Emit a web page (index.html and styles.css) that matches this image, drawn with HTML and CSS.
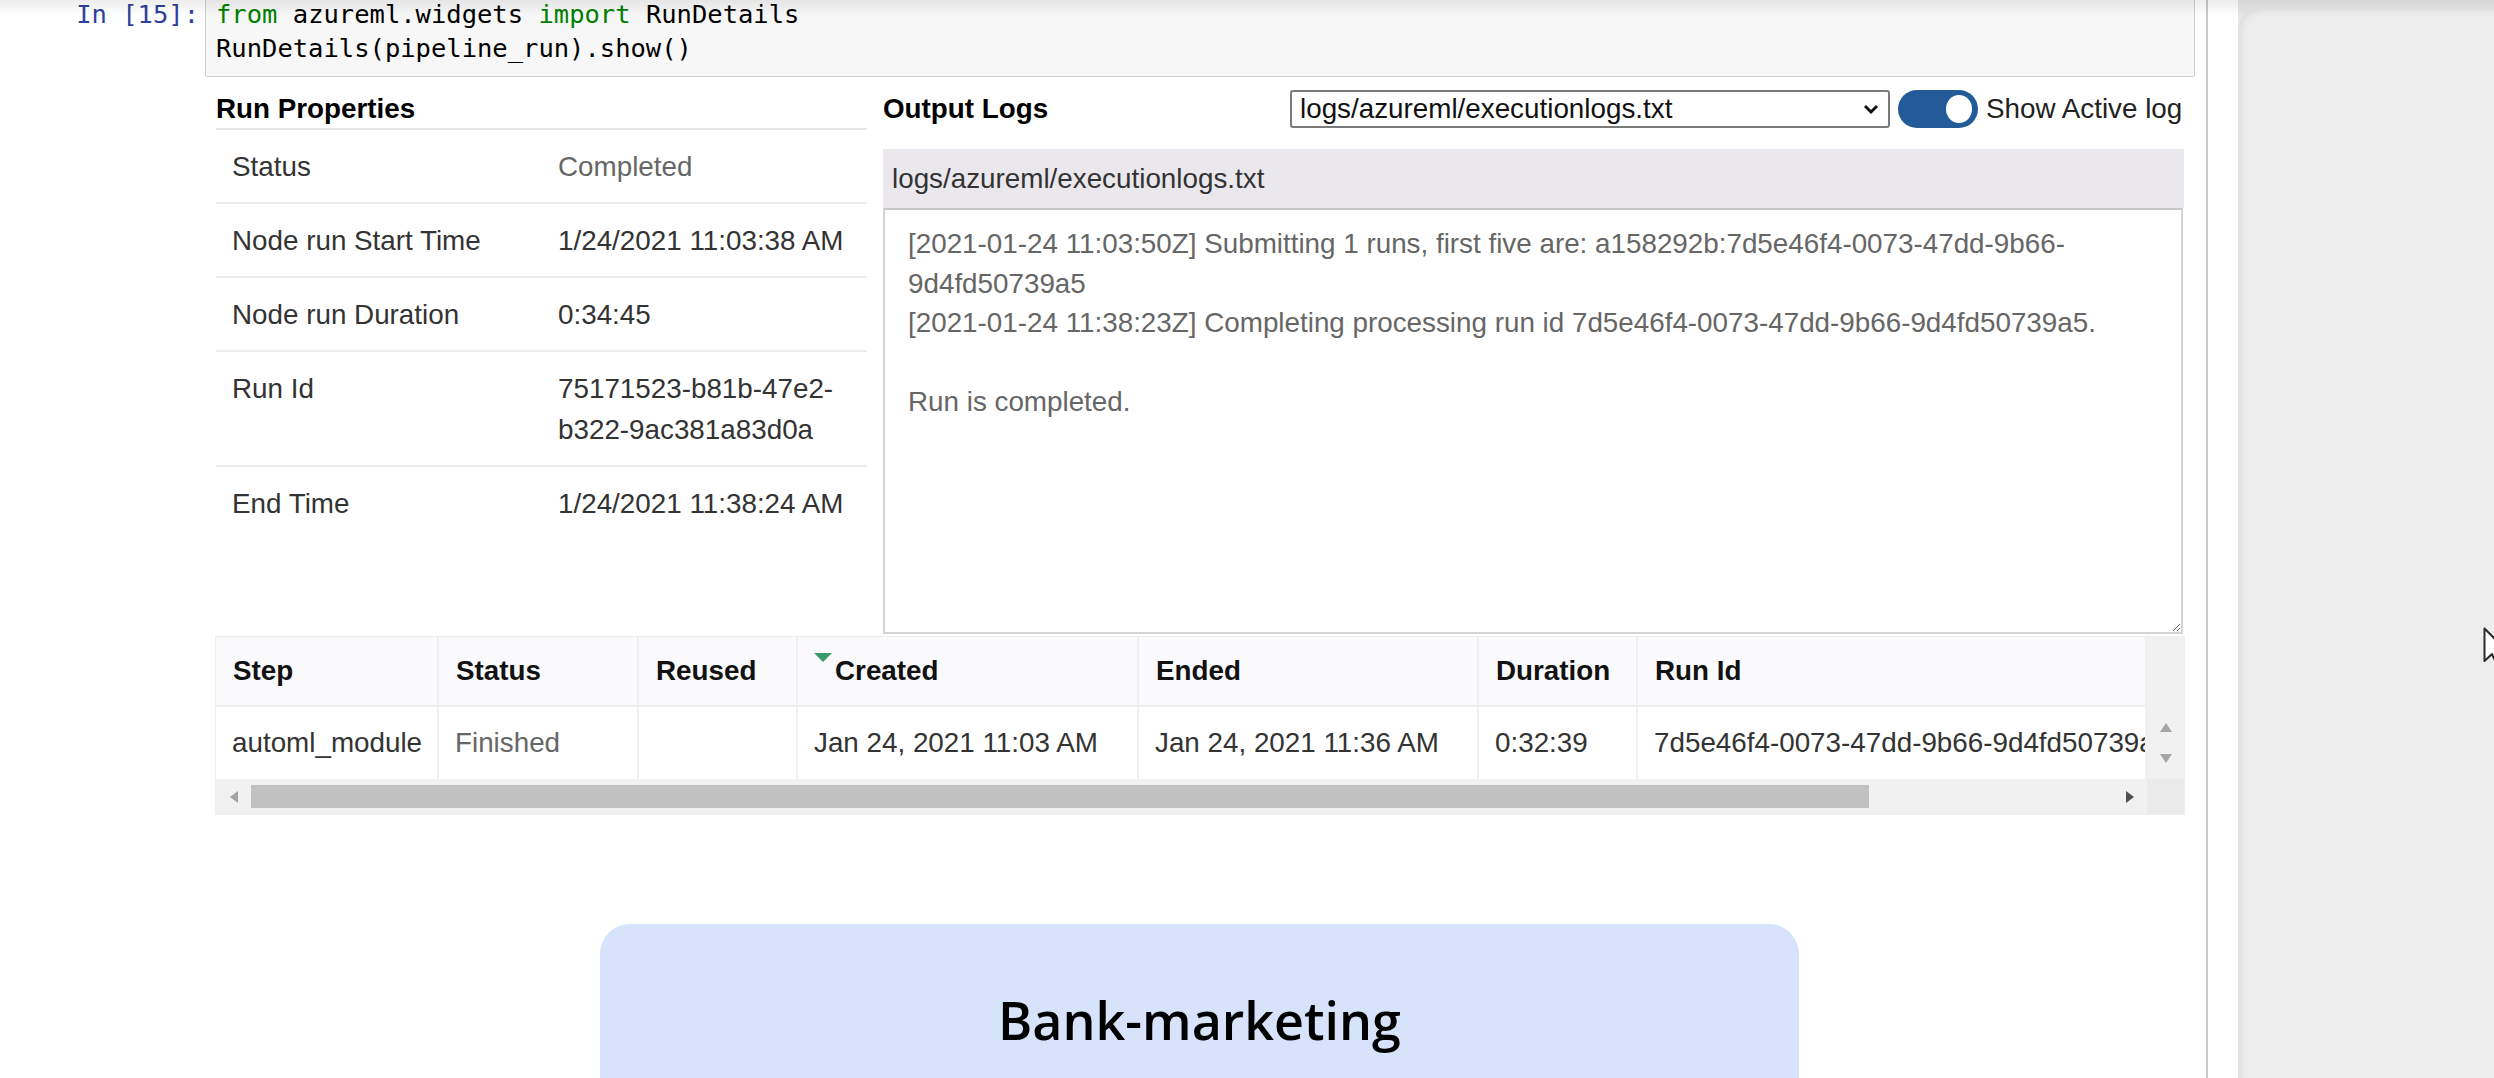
FILE: index.html
```html
<!DOCTYPE html>
<html>
<head>
<meta charset="utf-8">
<title>RunDetails</title>
<link rel="stylesheet" href="styles.css">
</head>
<body>
<div class="topshade"></div>
<div class="app">
  <main class="notebook">
    <div class="cell">
      <div class="prompt">In&nbsp;[15]:</div>
      <div class="code">
        <div><span class="kw">from</span> azureml.widgets <span class="kw">import</span> RunDetails</div>
        <div>RunDetails(pipeline_run).show()</div>
      </div>
    </div>
    <div class="output">
      <div class="widget-top">
        <section class="props">
          <div class="props-title">Run Properties</div>
          <div class="prow"><div class="pl">Status</div><div class="pv muted">Completed</div></div>
          <div class="prow"><div class="pl">Node run Start Time</div><div class="pv">1/24/2021 11:03:38 AM</div></div>
          <div class="prow"><div class="pl">Node run Duration</div><div class="pv">0:34:45</div></div>
          <div class="prow"><div class="pl">Run Id</div><div class="pv">75171523-b81b-47e2-<br>b322-9ac381a83d0a</div></div>
          <div class="prow last"><div class="pl">End Time</div><div class="pv">1/24/2021 11:38:24 AM</div></div>
        </section>
        <section class="logs">
          <div class="logs-bar">
            <div class="logs-title">Output Logs</div>
            <div class="select">
              <span>logs/azureml/executionlogs.txt</span>
              <svg class="chev" width="18" height="12" viewBox="0 0 18 12"><path d="M3 3 L9 9 L15 3" fill="none" stroke="#111" stroke-width="3"/></svg>
            </div>
            <div class="toggle"><span class="knob"></span></div>
            <div class="toggle-label">Show Active log</div>
          </div>
          <div class="log-head">logs/azureml/executionlogs.txt</div>
          <textarea class="log-body" readonly>[2021-01-24 11:03:50Z] Submitting 1 runs, first five are: a158292b:7d5e46f4-0073-47dd-9b66-
9d4fd50739a5
[2021-01-24 11:38:23Z] Completing processing run id 7d5e46f4-0073-47dd-9b66-9d4fd50739a5.

Run is completed.</textarea>
        </section>
      </div>
      <div class="steps">
        <div class="steps-main">
          <div class="th">Step</div>
          <div class="th">Status</div>
          <div class="th">Reused</div>
          <div class="th"><span class="sort"></span>Created</div>
          <div class="th">Ended</div>
          <div class="th">Duration</div>
          <div class="th">Run Id</div>
          <div class="td">automl_module</div>
          <div class="td muted">Finished</div>
          <div class="td"></div>
          <div class="td">Jan 24, 2021 11:03 AM</div>
          <div class="td">Jan 24, 2021 11:36 AM</div>
          <div class="td">0:32:39</div>
          <div class="td clip">7d5e46f4-0073-47dd-9b66-9d4fd50739a5</div>
        </div>
        <div class="vscroll">
          <span class="arr-up"></span>
          <span class="arr-down"></span>
        </div>
        <div class="hscroll">
          <span class="harr"><span class="arr-left"></span></span>
          <span class="thumb"></span>
          <span class="hspace"></span>
          <span class="harr"><span class="arr-right"></span></span>
        </div>
        <div class="corner"></div>
      </div>
    </div>
    <div class="card"><h2>Bank-marketing</h2></div>
  </main>
  <div class="gutter"></div>
  <aside class="side">
    <div class="side-inner"></div>
    <svg class="cursor" width="16" height="40" viewBox="0 0 16 40"><path d="M1.5 1.5 L1.5 34 L9 27 L14 38 L20 35 L15 25 L25 25 Z" fill="#fff" stroke="#2a2a2a" stroke-width="2" stroke-linejoin="round"/></svg>
  </aside>
</div>
</body>
</html>
```

FILE: styles.css
```css
* { box-sizing: border-box; }
html, body { margin: 0; height: 100%; overflow: hidden; background: #fff; }
body { font-family: "Liberation Sans", Arial, sans-serif; font-size: 27.8px; color: #333; }

.topshade { position: fixed; left: 0; right: 0; top: 0; height: 16px; background: linear-gradient(rgba(0,0,0,0.07), rgba(0,0,0,0)); z-index: 5; pointer-events: none; }

.app { display: flex; height: 100vh; }
.notebook { width: 2208px; flex: none; border-right: 2px solid #c9c9c9; }

.cell { display: flex; gap: 6px; margin-top: -14px; padding-right: 11px; }
.prompt { width: 199px; flex: none; text-align: right; font-family: "DejaVu Sans Mono", "Liberation Mono", monospace; font-size: 25.5px; line-height: 33.5px; color: #303f9f; padding-top: 12px; }
.code { flex: 1; background: #f7f7f7; border: 1px solid #cfcfcf; border-radius: 2px; padding: 11px 10px; font-family: "DejaVu Sans Mono", "Liberation Mono", monospace; font-size: 25.5px; line-height: 33.5px; color: #000; }
.kw { color: #008000; }

.output { margin-left: 216px; width: 1968px; padding-top: 13px; }
.widget-top { display: flex; gap: 16px; }

.props { width: 651px; flex: none; }
.props-title { height: 40px; line-height: 38px; font-weight: bold; color: #000; border-bottom: 2px solid #e6e6e6; }
.prow { display: flex; padding: 16px 0 15px; line-height: 41px; border-bottom: 2px solid #ececec; }
.prow.last { border-bottom: none; }
.pl { width: 342px; flex: none; padding-left: 16px; color: #333; }
.pv { flex: 1; color: #333; }
.muted { color: #666; }

.logs { width: 1301px; flex: none; }
.logs-bar { display: flex; align-items: center; height: 38px; }
.logs-title { width: 407px; flex: none; font-weight: bold; color: #000; }
.select { width: 600px; height: 38px; flex: none; border: 2px solid #7a7a7a; border-radius: 3px; display: flex; align-items: center; justify-content: space-between; padding: 0 8px 0 8px; color: #111; }
.chev { display: block; }
.toggle { width: 80px; height: 38px; flex: none; margin-left: 8px; border-radius: 19px; background: #235b98; display: flex; align-items: center; justify-content: flex-end; padding-right: 6px; }
.knob { width: 26px; height: 28px; border-radius: 50%; background: #fff; display: block; }
.toggle-label { margin-left: 8px; color: #222; white-space: nowrap; }

.log-head { margin-top: 21px; height: 59px; line-height: 59px; background: #eae8ec; padding-left: 9px; color: #333; }
.log-body { display: block; width: 1300px; height: 426px; margin: 0; border: 2px solid #d4d4d4; border-top-color: #c8c8c8; padding: 14px 23px; font-family: inherit; font-size: 27.8px; line-height: 39.5px; color: #666; background: #fff; resize: both; outline: none; }

.steps { margin-top: 3px; width: 1968px; display: grid; grid-template-columns: 1931px 37px; grid-template-rows: 70px 72px 35px; box-shadow: 0 0 0 1px #eeedf0; }
.steps-main { grid-row: 1 / 3; grid-column: 1; overflow: hidden; display: grid; grid-template-columns: 223px 200px 159px 341px 340px 159px 509px; grid-template-rows: 70px 72px; }
.th { background: #faf9fc; font-weight: bold; color: #111; padding-left: 17px; display: flex; align-items: center; border-right: 2px solid #efeef1; border-bottom: 2px solid #efeef1; white-space: nowrap; }
.td { padding-left: 16px; display: flex; align-items: center; border-right: 2px solid #f1f0f3; white-space: nowrap; overflow: hidden; color: #333; }
.td.muted { color: #666; }
.td.clip { text-overflow: clip; }
.sort { width: 0; height: 0; border-left: 9px solid transparent; border-right: 9px solid transparent; border-top: 9px solid #3a9a6c; align-self: flex-start; margin-top: 16px; margin-right: 3px; margin-left: -1px; }

.vscroll { grid-row: 1 / 3; grid-column: 2; background: #f1f1f1; display: flex; flex-direction: column; align-items: center; padding-top: 86px; gap: 22px; }
.arr-up { width: 0; height: 0; border-left: 6px solid transparent; border-right: 6px solid transparent; border-bottom: 9px solid #a6a6a6; }
.arr-down { width: 0; height: 0; border-left: 6px solid transparent; border-right: 6px solid transparent; border-top: 9px solid #a6a6a6; }

.hscroll { grid-row: 3; grid-column: 1; background: #f1f1f1; display: flex; align-items: center; }
.harr { width: 35px; height: 35px; flex: none; display: flex; align-items: center; justify-content: center; }
.arr-left { width: 0; height: 0; border-top: 6px solid transparent; border-bottom: 6px solid transparent; border-right: 8px solid #a3a3a3; }
.arr-right { width: 0; height: 0; border-top: 6px solid transparent; border-bottom: 6px solid transparent; border-left: 8px solid #505050; }
.thumb { width: 1618px; height: 23px; background: #c1c1c1; flex: none; }
.hspace { flex: 1; }
.corner { grid-row: 3; grid-column: 2; background: #ebebeb; }

.card { margin: 110px 0 0 600px; width: 1199px; height: 220px; background: #d6e3fb; border-radius: 30px 30px 0 0; }
.card h2 { margin: 0; padding-top: 61px; text-align: center; font-family: "Open Sans", "Noto Sans", sans-serif; font-weight: 600; font-size: 52px; line-height: 70px; color: #000; }

.gutter { width: 30px; flex: none; background: #fff; }
.side { flex: 1; position: relative; background: #e6e6e6; padding-top: 10px; overflow: hidden; }
.side-inner { height: 100%; background: #ededed; border-top-left-radius: 20px; box-shadow: inset 10px 4px 10px -8px rgba(0,0,0,0.08); }
.cursor { position: absolute; left: 245px; top: 627px; }
```
